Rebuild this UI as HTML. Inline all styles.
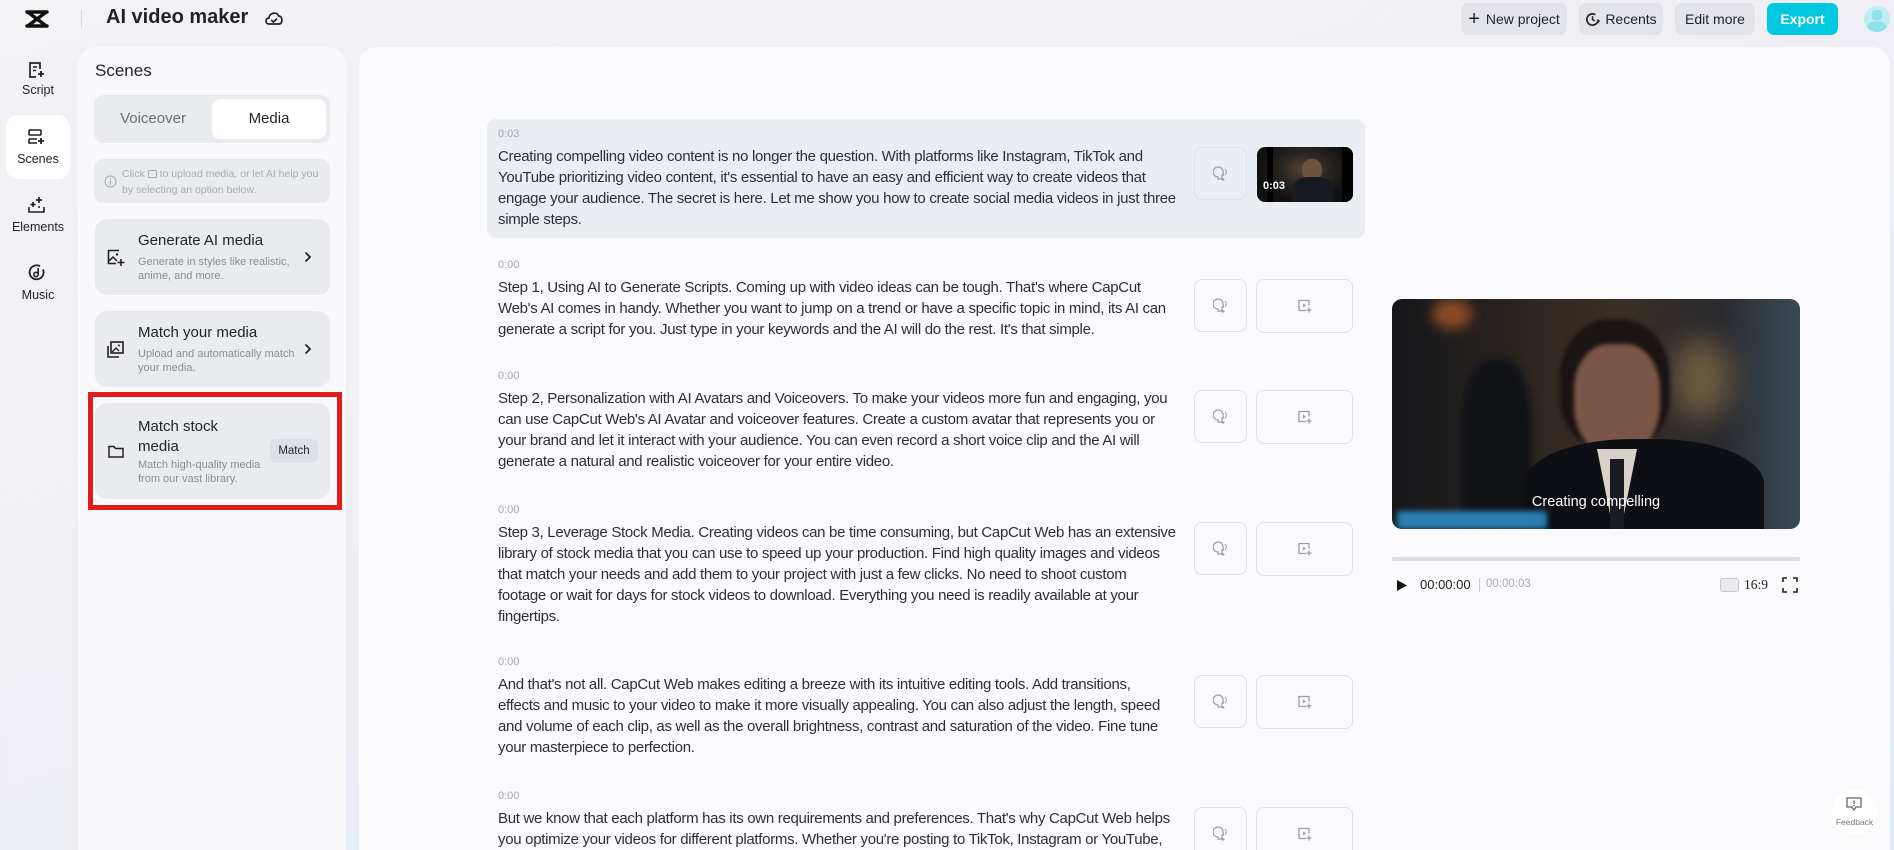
<!DOCTYPE html>
<html><head><meta charset="utf-8"><style>
*{margin:0;padding:0;box-sizing:border-box}
html,body{width:1894px;height:850px;overflow:hidden}
body{position:relative;font-family:"Liberation Sans",sans-serif;color:#1f2329;background:linear-gradient(160deg,#f3f3f6 0%,#eeeef4 50%,#dcecf3 100%)}
.abs{position:absolute}
.btn{position:absolute;top:3px;height:32px;border-radius:7px;background:#e2e4ea;font-size:14px;display:flex;align-items:center;justify-content:center;color:#1f2329}
.rail{position:absolute;left:6px;width:64px;text-align:center;font-size:12.5px}
.panel{position:absolute;left:78px;top:47px;width:268px;height:803px;background:#f9f9fb;border-radius:18px 18px 0 0}
.card{position:absolute;left:17px;width:235px;background:#e9ebef;border-radius:12px}
.ct{position:absolute;left:43px;font-size:15px;color:#1f2329}
.cd{position:absolute;left:43px;font-size:11px;color:#8a8e96;line-height:14px}
.main{position:absolute;left:359px;top:47px;width:1531px;height:803px;background:#fafafc;border-radius:18px 18px 0 0}
.sc{position:absolute;left:498px}
.tm{font-size:11px;color:#a5a8ae;line-height:14px;height:19px}
.tx{font-size:15px;letter-spacing:-0.3px;line-height:21px;color:#2b2f36;white-space:nowrap}
.mic{position:absolute;left:1194px;width:53px;height:53px;border:1px solid #dfe1e5;border-radius:8px;background:#fafafc}
.med{position:absolute;left:1256px;width:97px;height:54px;border:1px solid #dfe1e5;border-radius:8px;background:#fafafc}
.mic svg,.med svg{position:absolute;left:50%;top:50%;transform:translate(-50%,-50%)}
</style></head><body>

<svg class="abs" style="left:25px;top:9px" width="25" height="20" viewBox="0 0 25 20"><path d="M2 3 L22 3 M2 17 L22 17 M4 4 L20 16 M20 4 L4 16" stroke="#111" stroke-width="3.4" fill="none" stroke-linecap="round"/></svg>
<div class="abs" style="left:81px;top:10px;width:1px;height:18px;background:#d6d6dc"></div>
<div class="abs" style="left:106px;top:6px;font-size:20px;font-weight:bold">AI video maker</div>
<svg class="abs" style="left:264px;top:9px" width="20" height="18" viewBox="0 0 20 18"><path d="M5 15 C1 15 1 9 5 9 C5 4 13 2 14.5 7 C19 7 19 15 15 15 Z" stroke="#222" stroke-width="1.7" fill="none"/><path d="M7 11 L9.5 13 L13 9.5" stroke="#222" stroke-width="1.6" fill="none"/></svg>

<div class="btn" style="left:1461px;width:106px"><span style="font-size:20px;margin-right:6px;font-weight:300">+</span>New project</div>
<div class="btn" style="left:1579px;width:84px"><svg width="15" height="15" viewBox="0 0 16 16" style="margin-right:5px"><path d="M14 8 A6 6 0 1 1 11 2.8" stroke="#222" stroke-width="1.8" fill="none"/><path d="M8 4.5 V8 L10.5 9.5" stroke="#222" stroke-width="1.6" fill="none"/><path d="M13 9 L14.2 11 L15.5 9" stroke="#222" stroke-width="1.4" fill="none"/></svg>Recents</div>
<div class="btn" style="left:1675px;width:80px">Edit more</div>
<div class="btn" style="left:1767px;width:71px;background:#00c8e0;color:#fff;font-weight:bold">Export</div>
<div class="abs" style="left:1864px;top:6px;width:26px;height:26px;border-radius:50%;background:#bdeef3;overflow:hidden"><div class="abs" style="left:8px;top:4px;width:10px;height:10px;border-radius:3px;background:#8fe2ec"></div><div class="abs" style="left:3px;top:15px;width:20px;height:14px;border-radius:50%;background:#8fe2ec"></div></div>

<svg class="abs" style="left:28px;top:61px" width="17" height="18" viewBox="0 0 17 18"><path d="M12 8 V2 H2 V16 H8" stroke="#222" stroke-width="1.7" fill="none"/><path d="M5 6 H9 M5 9.5 H8" stroke="#222" stroke-width="1.5"/><path d="M13 10 V16 M10 13 H16" stroke="#222" stroke-width="1.8"/></svg>
<div class="rail" style="top:83px">Script</div>
<div class="abs" style="left:6px;top:115px;width:64px;height:64px;background:#fff;border-radius:12px"></div>
<svg class="abs" style="left:28px;top:129px" width="17" height="17" viewBox="0 0 17 17"><rect x="1" y="1" width="12" height="5" rx="1" stroke="#222" stroke-width="1.6" fill="none"/><path d="M1 10 H9 M1 10 V14 H9" stroke="#222" stroke-width="1.6" fill="none"/><path d="M13 9 V15 M10 12 H16" stroke="#222" stroke-width="1.8"/></svg>
<div class="rail" style="top:152px">Scenes</div>
<svg class="abs" style="left:28px;top:196px" width="18" height="18" viewBox="0 0 18 18"><path d="M1 11 V16 H16 V11" stroke="#222" stroke-width="1.6" fill="none"/><path d="M5 6 V11 M2.5 8.5 H7.5 M11 1 V7 M8 4 H14" stroke="#222" stroke-width="1.7"/><circle cx="11" cy="11" r="1" fill="#222"/></svg>
<div class="rail" style="top:220px">Elements</div>
<svg class="abs" style="left:28px;top:264px" width="18" height="18" viewBox="0 0 18 18"><path d="M15 5.5 A7 7 0 1 1 12 2.2" stroke="#222" stroke-width="1.8" fill="none"/><circle cx="8" cy="10.5" r="2.2" stroke="#222" stroke-width="1.6" fill="none"/><path d="M10.2 10.5 V4" stroke="#222" stroke-width="1.6"/></svg>
<div class="rail" style="top:288px">Music</div>

<div class="panel">
  <div class="abs" style="left:17px;top:14px;font-size:17px">Scenes</div>
  <div class="abs" style="left:16px;top:48px;width:236px;height:48px;background:#e9ebef;border-radius:10px"></div>
  <div class="abs" style="left:134px;top:52px;width:114px;height:40px;background:#fff;border-radius:8px"></div>
  <div class="abs" style="left:16px;top:63px;width:118px;text-align:center;font-size:15px;color:#6b6f76">Voiceover</div>
  <div class="abs" style="left:134px;top:63px;width:114px;text-align:center;font-size:15px">Media</div>
  <div class="abs" style="left:16px;top:112px;width:236px;height:44px;background:#e9ebef;border-radius:9px"></div>
  <svg class="abs" style="left:26px;top:128px" width="13" height="13" viewBox="0 0 13 13"><circle cx="6.5" cy="6.5" r="5.5" stroke="#aaa" fill="none"/><path d="M6.5 5.5 V9.5" stroke="#aaa" stroke-width="1.2"/><circle cx="6.5" cy="3.7" r=".7" fill="#aaa"/></svg>
  <div class="abs" style="left:44px;top:119px;font-size:10.5px;color:#a8abb1;line-height:16px;white-space:nowrap">Click <span style="display:inline-block;width:9px;height:8px;border:1px solid #aaa;border-radius:1px;vertical-align:-1px"></span> to upload media, or let AI help you<br>by selecting an option below.</div>

  <div class="card" style="top:172px;height:76px"></div>
  <svg class="abs" style="left:29px;top:202px" width="18" height="18" viewBox="0 0 18 18"><path d="M12 1.5 H1.5 V14.5 H9" stroke="#222" stroke-width="1.6" fill="none"/><path d="M2 12 L6 8 L10 12" stroke="#222" stroke-width="1.5" fill="none"/><circle cx="10" cy="5.5" r="1.2" fill="#222"/><path d="M14 10 V17 M10.5 13.5 H17.5" stroke="#222" stroke-width="1.6"/></svg>
  <div class="ct" style="left:60px;top:185px">Generate AI media</div>
  <div class="cd" style="left:60px;top:208px">Generate in styles like realistic,<br>anime, and more.</div>
  <svg class="abs" style="left:226px;top:204px" width="8" height="12" viewBox="0 0 8 12"><path d="M1.5 1.5 L6 6 L1.5 10.5" stroke="#222" stroke-width="1.7" fill="none"/></svg>

  <div class="card" style="top:264px;height:76px"></div>
  <svg class="abs" style="left:29px;top:294px" width="17" height="17" viewBox="0 0 17 17"><rect x="4" y="1" width="12" height="11" stroke="#222" stroke-width="1.6" fill="none"/><path d="M1 5 V16 H12" stroke="#222" stroke-width="1.6" fill="none"/><path d="M5 11 L9 7 L12 10" stroke="#222" stroke-width="1.4" fill="none"/><circle cx="12" cy="4.5" r="1" fill="#222"/></svg>
  <div class="ct" style="left:60px;top:277px">Match your media</div>
  <div class="cd" style="left:60px;top:300px">Upload and automatically match<br>your media.</div>
  <svg class="abs" style="left:226px;top:296px" width="8" height="12" viewBox="0 0 8 12"><path d="M1.5 1.5 L6 6 L1.5 10.5" stroke="#222" stroke-width="1.7" fill="none"/></svg>

  <div class="card" style="top:356px;height:96px"></div>
  <svg class="abs" style="left:30px;top:398px" width="16" height="13" viewBox="0 0 16 13"><path d="M1 1.5 H6 L7.5 3.5 H15 V12 H1 Z" stroke="#222" stroke-width="1.5" fill="none"/></svg>
  <div class="ct" style="left:60px;top:370px;line-height:20px">Match stock<br>media</div>
  <div class="cd" style="left:60px;top:411px">Match high-quality media<br>from our vast library.</div>
  <div class="abs" style="left:192px;top:392px;width:48px;height:24px;background:#dde0e6;border-radius:6px;font-size:11.5px;text-align:center;line-height:24px">Match</div>
</div>
<div class="abs" style="left:88px;top:392px;width:254px;height:118px;border:5px solid #e21b1b"></div>

<div class="main"></div>
<div class="abs" style="left:487px;top:119px;width:878px;height:119px;background:#eaedf1;border-radius:9px"></div>

<div class="sc" style="top:127px"><div class="tm">0:03</div><div class="tx">Creating compelling video content is no longer the question. With platforms like Instagram, TikTok and<br>YouTube prioritizing video content, it's essential to have an easy and efficient way to create videos that<br>engage your audience. The secret is here. Let me show you how to create social media videos in just three<br>simple steps.</div></div>
<div class="sc" style="top:258px"><div class="tm">0:00</div><div class="tx">Step 1, Using AI to Generate Scripts. Coming up with video ideas can be tough. That's where CapCut<br>Web's AI comes in handy. Whether you want to jump on a trend or have a specific topic in mind, its AI can<br>generate a script for you. Just type in your keywords and the AI will do the rest. It's that simple.</div></div>
<div class="sc" style="top:369px"><div class="tm">0:00</div><div class="tx">Step 2, Personalization with AI Avatars and Voiceovers. To make your videos more fun and engaging, you<br>can use CapCut Web's AI Avatar and voiceover features. Create a custom avatar that represents you or<br>your brand and let it interact with your audience. You can even record a short voice clip and the AI will<br>generate a natural and realistic voiceover for your entire video.</div></div>
<div class="sc" style="top:503px"><div class="tm">0:00</div><div class="tx">Step 3, Leverage Stock Media. Creating videos can be time consuming, but CapCut Web has an extensive<br>library of stock media that you can use to speed up your production. Find high quality images and videos<br>that match your needs and add them to your project with just a few clicks. No need to shoot custom<br>footage or wait for days for stock videos to download. Everything you need is readily available at your<br>fingertips.</div></div>
<div class="sc" style="top:655px"><div class="tm">0:00</div><div class="tx">And that's not all. CapCut Web makes editing a breeze with its intuitive editing tools. Add transitions,<br>effects and music to your video to make it more visually appealing. You can also adjust the length, speed<br>and volume of each clip, as well as the overall brightness, contrast and saturation of the video. Fine tune<br>your masterpiece to perfection.</div></div>
<div class="sc" style="top:789px"><div class="tm">0:00</div><div class="tx">But we know that each platform has its own requirements and preferences. That's why CapCut Web helps<br>you optimize your videos for different platforms. Whether you're posting to TikTok, Instagram or YouTube,</div></div>

<div class="mic" style="top:147px;background:#eaedf1"><svg width="16" height="16" viewBox="0 0 16 16"><path d="M9 13 H5 V11 A5 5 0 1 1 10 7 L10.5 9 H9 Z" stroke="#9a9ea6" stroke-width="1.2" fill="none"/><path d="M12 3 A4 4 0 0 1 12 9" stroke="#9a9ea6" fill="none"/><path d="M10 12 V15 M8.5 13.5 H11.5" stroke="#9a9ea6"/></svg></div>
<div class="abs" style="left:1257px;top:147px;width:96px;height:55px;border-radius:8px;overflow:hidden;background:radial-gradient(ellipse at 50% 40%,#5a4636 0%,#2a2520 35%,#111 70%),#111">
  <div class="abs" style="left:10px;top:0;width:6px;height:55px;background:#000"></div>
  <div class="abs" style="left:85px;top:0;width:11px;height:55px;background:#000"></div>
  <div class="abs" style="left:45px;top:12px;width:20px;height:22px;border-radius:45%;background:#6b5242"></div>
  <div class="abs" style="left:36px;top:30px;width:40px;height:25px;border-radius:40% 40% 0 0;background:#181a22"></div>
  <div class="abs" style="left:6px;top:33px;font-size:11px;color:#fff;font-weight:bold">0:03</div>
</div>
<div class="mic" style="top:279px"><svg width="16" height="16" viewBox="0 0 16 16"><path d="M9 13 H5 V11 A5 5 0 1 1 10 7 L10.5 9 H9 Z" stroke="#9a9ea6" stroke-width="1.2" fill="none"/><path d="M12 3 A4 4 0 0 1 12 9" stroke="#9a9ea6" fill="none"/><path d="M10 12 V15 M8.5 13.5 H11.5" stroke="#9a9ea6"/></svg></div>
<div class="med" style="top:279px"><svg width="14" height="13" viewBox="0 0 14 13"><path d="M11 6 V1 H1 V11 H8" stroke="#9a9ea6" stroke-width="1.3" fill="none"/><path d="M5 4 L8 6 L5 8 Z" fill="#9a9ea6"/><path d="M11 8 V13 M8.5 10.5 H13.5" stroke="#9a9ea6" stroke-width="1.3"/></svg></div>
<div class="mic" style="top:390px"><svg width="16" height="16" viewBox="0 0 16 16"><path d="M9 13 H5 V11 A5 5 0 1 1 10 7 L10.5 9 H9 Z" stroke="#9a9ea6" stroke-width="1.2" fill="none"/><path d="M12 3 A4 4 0 0 1 12 9" stroke="#9a9ea6" fill="none"/><path d="M10 12 V15 M8.5 13.5 H11.5" stroke="#9a9ea6"/></svg></div>
<div class="med" style="top:390px"><svg width="14" height="13" viewBox="0 0 14 13"><path d="M11 6 V1 H1 V11 H8" stroke="#9a9ea6" stroke-width="1.3" fill="none"/><path d="M5 4 L8 6 L5 8 Z" fill="#9a9ea6"/><path d="M11 8 V13 M8.5 10.5 H13.5" stroke="#9a9ea6" stroke-width="1.3"/></svg></div>
<div class="mic" style="top:522px"><svg width="16" height="16" viewBox="0 0 16 16"><path d="M9 13 H5 V11 A5 5 0 1 1 10 7 L10.5 9 H9 Z" stroke="#9a9ea6" stroke-width="1.2" fill="none"/><path d="M12 3 A4 4 0 0 1 12 9" stroke="#9a9ea6" fill="none"/><path d="M10 12 V15 M8.5 13.5 H11.5" stroke="#9a9ea6"/></svg></div>
<div class="med" style="top:522px"><svg width="14" height="13" viewBox="0 0 14 13"><path d="M11 6 V1 H1 V11 H8" stroke="#9a9ea6" stroke-width="1.3" fill="none"/><path d="M5 4 L8 6 L5 8 Z" fill="#9a9ea6"/><path d="M11 8 V13 M8.5 10.5 H13.5" stroke="#9a9ea6" stroke-width="1.3"/></svg></div>
<div class="mic" style="top:675px"><svg width="16" height="16" viewBox="0 0 16 16"><path d="M9 13 H5 V11 A5 5 0 1 1 10 7 L10.5 9 H9 Z" stroke="#9a9ea6" stroke-width="1.2" fill="none"/><path d="M12 3 A4 4 0 0 1 12 9" stroke="#9a9ea6" fill="none"/><path d="M10 12 V15 M8.5 13.5 H11.5" stroke="#9a9ea6"/></svg></div>
<div class="med" style="top:675px"><svg width="14" height="13" viewBox="0 0 14 13"><path d="M11 6 V1 H1 V11 H8" stroke="#9a9ea6" stroke-width="1.3" fill="none"/><path d="M5 4 L8 6 L5 8 Z" fill="#9a9ea6"/><path d="M11 8 V13 M8.5 10.5 H13.5" stroke="#9a9ea6" stroke-width="1.3"/></svg></div>
<div class="mic" style="top:807px"><svg width="16" height="16" viewBox="0 0 16 16"><path d="M9 13 H5 V11 A5 5 0 1 1 10 7 L10.5 9 H9 Z" stroke="#9a9ea6" stroke-width="1.2" fill="none"/><path d="M12 3 A4 4 0 0 1 12 9" stroke="#9a9ea6" fill="none"/><path d="M10 12 V15 M8.5 13.5 H11.5" stroke="#9a9ea6"/></svg></div>
<div class="med" style="top:807px"><svg width="14" height="13" viewBox="0 0 14 13"><path d="M11 6 V1 H1 V11 H8" stroke="#9a9ea6" stroke-width="1.3" fill="none"/><path d="M5 4 L8 6 L5 8 Z" fill="#9a9ea6"/><path d="M11 8 V13 M8.5 10.5 H13.5" stroke="#9a9ea6" stroke-width="1.3"/></svg></div>

<div class="abs" style="left:1392px;top:299px;width:408px;height:230px;border-radius:10px;overflow:hidden;background:linear-gradient(90deg,#15161a 0%,#2a2420 30%,#3b3026 55%,#2a2a2e 80%,#3a4a55 100%)">
  <div class="abs" style="left:40px;top:0;width:40px;height:30px;border-radius:50%;background:#8a4a25;filter:blur(6px)"></div>
  <div class="abs" style="left:70px;top:60px;width:70px;height:170px;border-radius:40% 40% 0 0;background:#101216;filter:blur(4px)"></div>
  <div class="abs" style="left:280px;top:40px;width:60px;height:80px;border-radius:50%;background:#6a5a40;filter:blur(14px)"></div>
  <div class="abs" style="left:168px;top:20px;width:110px;height:130px;border-radius:45% 45% 40% 40%;background:#1a1412;filter:blur(2px)"></div>
  <div class="abs" style="left:182px;top:45px;width:86px;height:112px;border-radius:40% 40% 45% 45%;background:#7a5646;filter:blur(2px)"></div>
  <div class="abs" style="left:132px;top:140px;width:240px;height:100px;border-radius:45% 45% 0 0;background:#0e0f14"></div>
  <div class="abs" style="left:205px;top:150px;width:40px;height:80px;background:#d8d2c8;clip-path:polygon(0 0,100% 0,60% 100%,40% 100%)"></div>
  <div class="abs" style="left:218px;top:160px;width:14px;height:70px;background:#1a1c24"></div>
  <div class="abs" style="left:5px;top:212px;width:150px;height:18px;background:#2a7fb0;filter:blur(3px)"></div>
  <div class="abs" style="left:0;top:195px;width:408px;text-align:center;font-size:14.5px;color:#fff">Creating compelling</div>
</div>
<div class="abs" style="left:1392px;top:557px;width:408px;height:4px;background:#dcdde0;border-radius:2px"></div>
<svg class="abs" style="left:1396px;top:579px" width="12" height="13" viewBox="0 0 12 13"><path d="M1 1 L11 6.5 L1 12 Z" fill="#111"/></svg>
<div class="abs" style="left:1420px;top:577px;font-size:13px;color:#222">00:00:00</div>
<div class="abs" style="left:1479px;top:578px;width:1px;height:14px;background:#ccc"></div>
<div class="abs" style="left:1486px;top:578px;font-size:11.5px;color:#a8abb1">00:00:03</div>
<div class="abs" style="left:1720px;top:578px;width:19px;height:14px;border:1px solid #c6c8cc;border-radius:3px;background:#e8eaee"></div>
<div class="abs" style="left:1744px;top:577px;font-size:13.5px;font-family:'Liberation Serif',serif;color:#222">16:9</div>
<svg class="abs" style="left:1782px;top:577px" width="16" height="16" viewBox="0 0 16 16"><path d="M1 5 V1 H5 M11 1 H15 V5 M15 11 V15 H11 M5 15 H1 V11" stroke="#222" stroke-width="1.6" fill="none"/></svg>

<div class="abs" style="left:1832px;top:790px;width:45px;height:45px;border-radius:50%;background:#fff"></div>
<svg class="abs" style="left:1846px;top:797px" width="16" height="15" viewBox="0 0 16 15"><path d="M1 1 H15 V10 H10 L8 13 L6 10 H1 Z" stroke="#666" stroke-width="1.3" fill="none"/><path d="M8 3.5 V7" stroke="#666" stroke-width="1.4"/><circle cx="8" cy="8.6" r=".8" fill="#666"/></svg>
<div class="abs" style="left:1832px;top:817px;width:45px;text-align:center;font-size:8.5px;color:#777">Feedback</div>
</body></html>
